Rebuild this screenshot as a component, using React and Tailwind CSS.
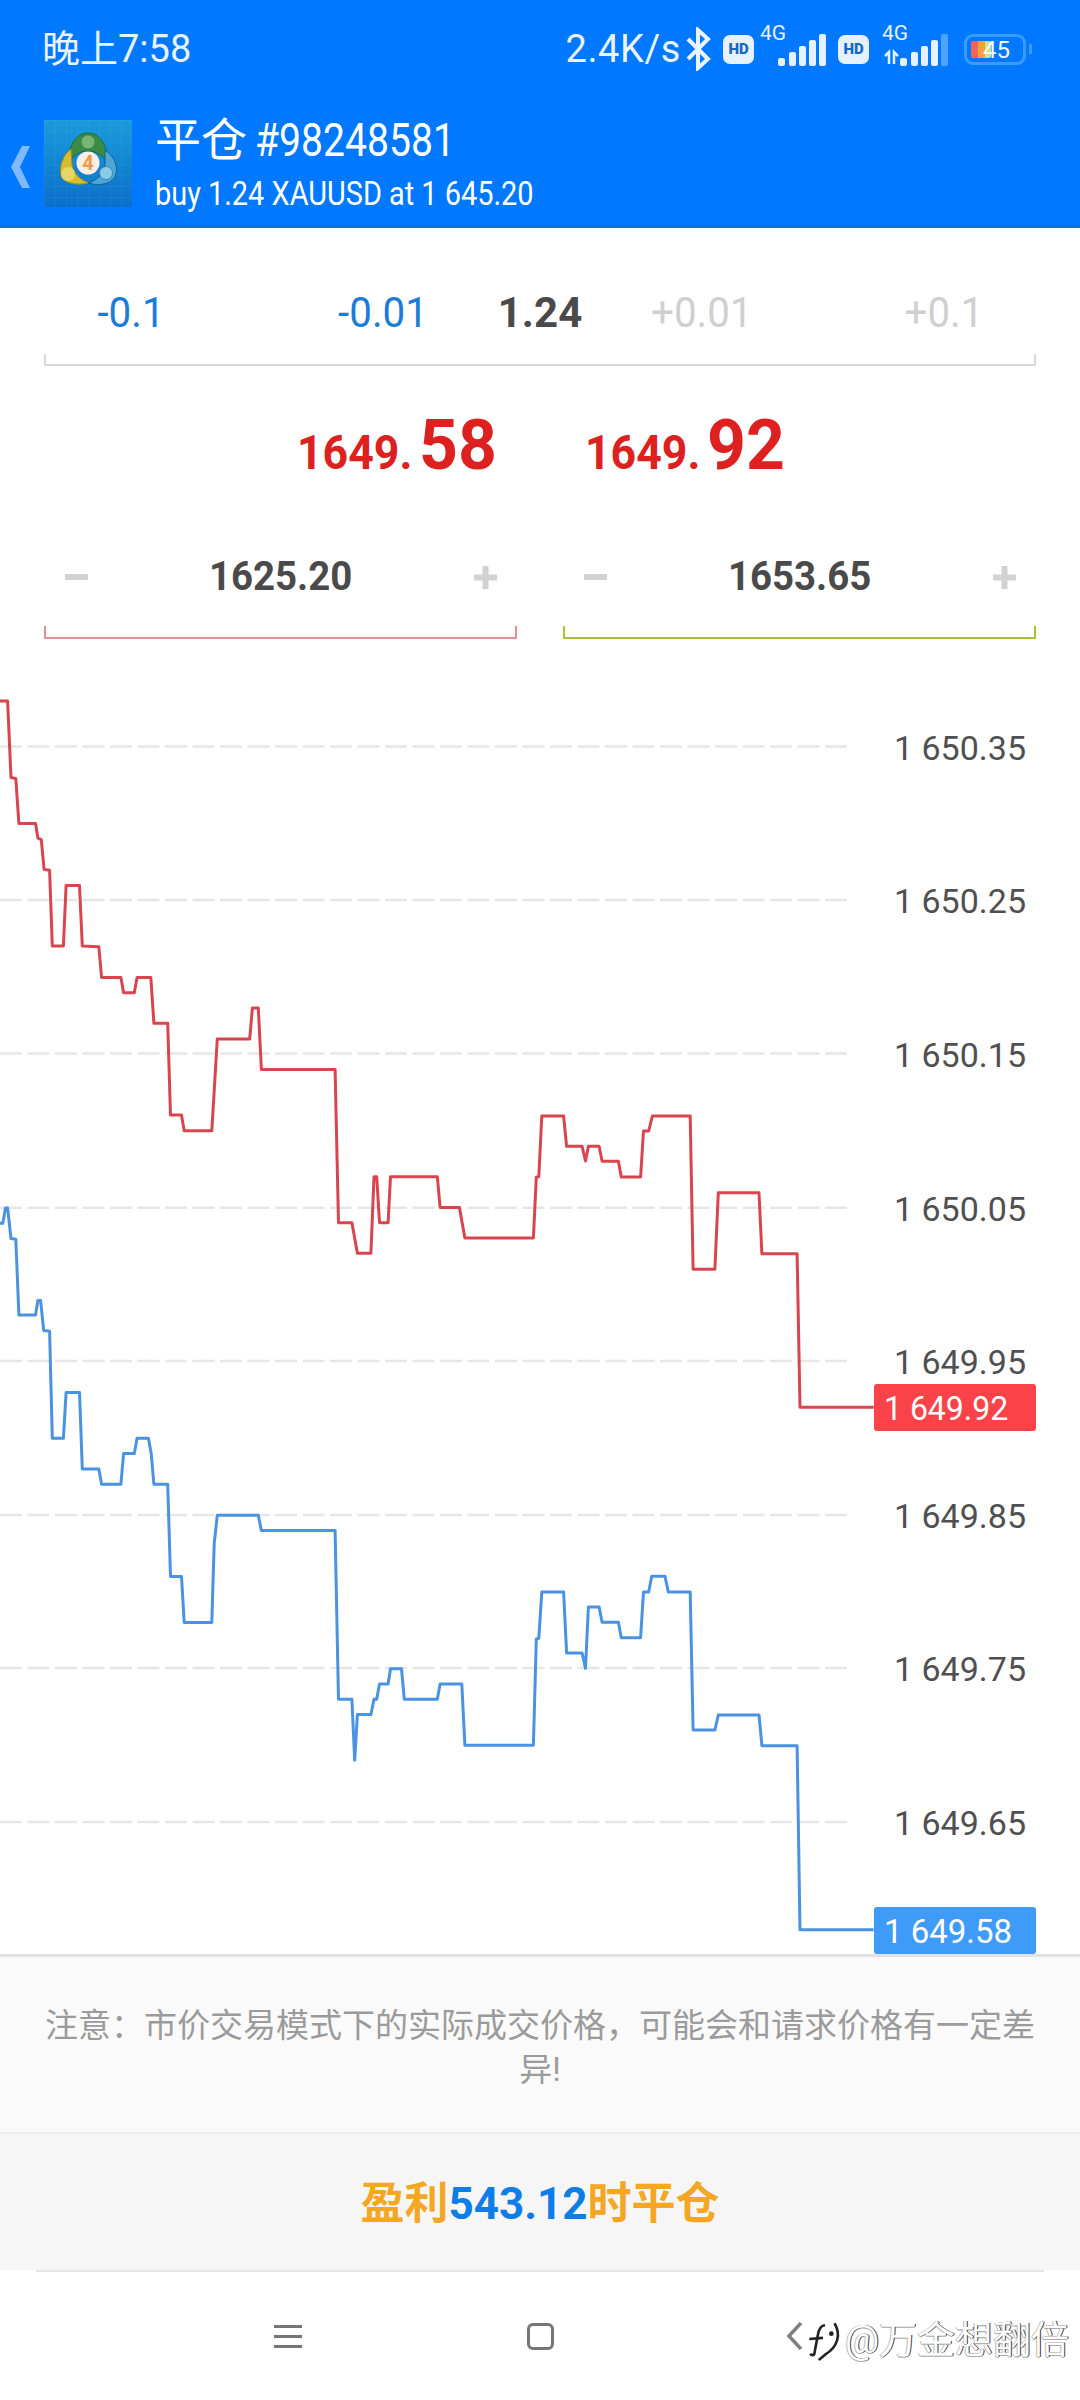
import React from "react";

const crop = (pts, sx, sy, ox, oy) => pts.map(([x, y]) => `${(x / sx + ox).toFixed(1)},${(y / sy + oy).toFixed(1)}`).join(" ");

// traced from the chart, first half of each line then the second half
const askLine =
  crop([[0,55],[22,55],[32,255],[46,257],[55,375],[103,375],[110,413],[120,417],[128,495],[144,497],[152,695],[184,695],[192,537],[231,537],[239,695],[287,697],[295,777],[351,777],[359,817],[390,817],[398,777],[438,777],[447,897],[487,897],[495,1137],[527,1137],[535,1178],[615,1178],[631,938],[725,938],[733,857],[750,857],[759,1018],[973,1018],[983,1418],[1022,1418],[1038,1498],[1077,1498],[1086,1298],[1094,1298],[1102,1418],[1127,1418],[1134,1298],[1270,1298],[1278,1378],[1334,1378],[1350,1458],[1549,1458]], 2.904, 2.613, 0, 680) +
  " " +
  crop([[98,352],[105,350],[113,168],[172,168],[180,259],[222,259],[231,303],[239,259],[268,259],[276,304],[320,304],[328,351],[380,351],[388,213],[402,213],[412,168],[514,168],[522,628],[581,628],[590,398],[700,398],[708,581],[803,581],[811,1042],[1010,1042]], 2.703, 3, 500, 1060);

const bidLine =
  crop([[0,113],[8,113],[16,73],[22,73],[32,153],[46,155],[55,353],[103,353],[110,315],[118,315],[127,393],[144,395],[152,675],[184,675],[192,555],[231,555],[239,755],[287,755],[295,795],[351,795],[359,715],[390,715],[398,675],[431,675],[439,715],[447,795],[487,795],[495,1036],[527,1036],[535,1156],[615,1156],[622,950],[631,876],[750,876],[759,916],[973,916],[983,1357],[1022,1357],[1030,1516],[1038,1397],[1077,1397],[1086,1357],[1094,1357],[1102,1317],[1127,1317],[1134,1277],[1166,1277],[1174,1357],[1270,1357],[1278,1317],[1341,1317],[1350,1477],[1549,1477]], 2.904, 2.613, 0, 1180) +
  " " +
  crop([[98,537],[105,535],[113,396],[172,396],[180,579],[222,579],[231,625],[239,441],[268,441],[276,487],[320,487],[328,533],[380,533],[388,396],[402,396],[410,349],[446,349],[455,396],[514,396],[522,810],[581,810],[590,765],[700,765],[708,857],[803,857],[811,1409],[1010,1409]], 2.703, 3, 500, 1460);

const gridLines = [746.5, 900, 1053.5, 1207.7, 1361, 1515, 1668, 1822];
const priceLabels = ["1 650.35", "1 650.25", "1 650.15", "1 650.05", "1 649.95", "1 649.85", "1 649.75", "1 649.65"];

function Mt4Logo() {
  return (
    <svg width="88" height="87" viewBox="0 0 88 87" className="shrink-0">
      <defs>
        <linearGradient id="tile" x1="0" y1="0" x2="0" y2="1">
          <stop offset="0" stopColor="#1a9bdc" />
          <stop offset="1" stopColor="#0b6fca" />
        </linearGradient>
        <pattern id="tileGrid" width="11" height="11" patternUnits="userSpaceOnUse">
          <path d="M11 0H0V11" fill="none" stroke="#ffffff" strokeOpacity="0.08" />
        </pattern>
      </defs>
      <rect width="88" height="87" fill="url(#tile)" />
      <rect width="88" height="87" fill="url(#tileGrid)" />
      <path d="M25 42C24 25 33 13 44 13s20 12 19 29c-5-8-12-11-19-11s-14 3-19 11z" fill="#3b8a45" stroke="#1f6a3a" />
      <circle cx="44" cy="22" r="6.5" fill="#78b574" />
      <path d="M27 29C19 35 15 46 17 55c2 8 14 11 29 8-9-2-16-9-18-18z" fill="#d6bd2e" stroke="#9a8a20" />
      <circle cx="24" cy="54" r="7" fill="#e8d566" />
      <path d="M61 30c9 6 13 15 11 24-2 9-15 13-28 9 8-2 16-9 17-18z" fill="#4da6d6" stroke="#0f5f99" />
      <circle cx="62" cy="53" r="6.5" fill="#8acbe6" stroke="#0f5f99" strokeWidth="0.5" />
      <circle cx="44" cy="43" r="11.5" fill="#f6efe3" />
      <text x="44" y="50" textAnchor="middle" fontFamily="Roboto" fontWeight="700" fontSize="20" fill="#ef9a4a">4</text>
    </svg>
  );
}

function HdBadge() {
  return (
    <span className="flex h-[29px] w-[31px] items-center justify-center rounded-[7px] bg-[#e6f1ff] text-[15px] leading-none font-black text-[#1668c8]">
      HD
    </span>
  );
}

function Signal({ lastDim, arrows }) {
  return (
    <div className="relative h-[38px] w-[66px]">
      <span className="absolute top-[-8px] left-0 text-[21px] leading-[22px] text-[#e6f1ff]">4G</span>
      <svg width="66" height="38" viewBox="0 0 66 38" className="absolute inset-0">
        {arrows && <path d="M3 26l4-4v12M12 34v-12l4 4" fill="none" stroke="#e6f1ff" strokeWidth="2.5" />}
        <g fill="#e6f1ff">
          <rect x="18" y="28" width="7" height="8" rx="2" />
          <rect x="29" y="22" width="7" height="14" rx="2" />
          <rect x="39" y="16" width="7" height="20" rx="2" />
          <rect x="49" y="10" width="7" height="26" rx="2" />
          <rect x="59" y="4" width="7" height="32" rx="2" fillOpacity={lastDim ? 0.35 : 1} />
        </g>
      </svg>
    </div>
  );
}

function StatusBar() {
  return (
    <div className="flex h-[96px] items-center justify-between pt-[2px] pr-[54px] pl-[42px] text-[#eaf3ff]">
      <span className="text-[38px] leading-none">晚上7:58</span>
      <div className="flex items-center">
        <span className="text-[38px] leading-none tracking-[0.6px]">2.4K/s</span>
        <svg width="26" height="44" viewBox="0 0 26 44" fill="none" stroke="#eaf3ff" strokeWidth="4" className="ml-[4px]">
          <path d="M3 12l20 20-10 9V3l10 9L3 32" />
        </svg>
        <div className="ml-[12px] flex items-center">
          <HdBadge />
        </div>
        <div className="ml-[6px]">
          <Signal />
        </div>
        <div className="ml-[12px]">
          <HdBadge />
        </div>
        <div className="ml-[13px]">
          <Signal lastDim arrows />
        </div>
        <div className="relative ml-[16px] h-[31px] w-[62px] rounded-[9px] border-[3px] border-[#3a9bff]">
          <div className="absolute top-[4px] left-[4px] flex h-[17px] overflow-hidden rounded-[2px]">
            <span className="w-[7px] bg-[#f0645c]" />
            <span className="w-[7px] bg-[#f3a33c]" />
            <span className="w-[6px] bg-[#cfe28a]" />
          </div>
          <span className="absolute top-[1px] left-[16px] text-[24px] leading-[24px] text-[#f2f7ff]">45</span>
          <span className="absolute top-[7px] right-[-9px] h-[10px] w-[3px] bg-[#3a9bff]" />
        </div>
      </div>
    </div>
  );
}

function TitleBar() {
  return (
    <div className="flex h-[129px] items-start">
      <svg width="20" height="42" viewBox="0 0 20 42" className="mt-[50px] ml-[11px] shrink-0">
        <path d="M19 0h-8L0 21l11 21h8L9 21z" fill="#7fb9ff" />
      </svg>
      <div className="mt-[24px] ml-[13px]">
        <Mt4Logo />
      </div>
      <div className="ml-[23px] flex flex-col text-white">
        <div className="mt-[18px] flex h-[52px] items-center">
          <span className="text-[46px] leading-none">平仓</span>
          <span className="ml-[8px] inline-block origin-left scale-x-[0.85] text-[46px] leading-none whitespace-nowrap">#98248581</span>
        </div>
        <span className="mt-[7px] inline-block origin-left scale-x-[0.85] text-[34px] leading-[40px] whitespace-nowrap">buy 1.24 XAUUSD at 1 645.20</span>
      </div>
    </div>
  );
}

function Bracket({ className }) {
  return <div className={`border-x-2 border-b-2 ${className}`} />;
}

function PlusMark() {
  return (
    <svg width="23" height="23" viewBox="0 0 23 23" fill="#d2d2d2">
      <rect y="8.5" width="23" height="6" />
      <rect x="8.5" width="6" height="23" />
    </svg>
  );
}

function PriceInput({ value, bracket }) {
  return (
    <div className="w-[473px]">
      <div className="flex h-[106px] items-center justify-between pt-[8px] pr-[20px] pl-[21px]">
        <span className="h-[6px] w-[23px] bg-[#d2d2d2]" />
        <span className="inline-block scale-x-[0.96] text-[40px] leading-none font-bold text-[#4a4a4a]">{value}</span>
        <PlusMark />
      </div>
      <Bracket className={`h-[13px] ${bracket}`} />
    </div>
  );
}

function BigPrice({ small, big }) {
  return (
    <div className="flex w-[288px] items-baseline font-bold text-[#dd2020]">
      <span className="inline-block origin-left scale-x-[0.93] text-[48px] leading-none">{small}</span>
      <span className="ml-[-2px] inline-block origin-left scale-x-[0.97] text-[70px] leading-none">{big}</span>
    </div>
  );
}

function Chart() {
  return (
    <div className="relative flex-1">
      <svg width="1080" height="1315" viewBox="0 639 1080 1315" className="absolute inset-0">
        {gridLines.map((y) => (
          <line key={y} x1="0" x2="847" y1={y} y2={y} stroke="#e6e6e6" strokeWidth="2.5" strokeDasharray="22 5.5" />
        ))}
        <polyline points={askLine} fill="none" stroke="#d8454e" strokeWidth="3" strokeLinejoin="round" />
        <polyline points={bidLine} fill="none" stroke="#4a92e2" strokeWidth="3" strokeLinejoin="round" />
      </svg>
      <div className="absolute top-[32px] right-[54px] flex flex-col items-end text-[34px] leading-none text-[#505050]">
        {priceLabels.map((label) => (
          <span key={label} className="flex h-[153.6px] items-center whitespace-pre">
            {label}
          </span>
        ))}
      </div>
      <div className="absolute top-[745px] right-[44px] flex h-[47px] w-[162px] items-center rounded-[3px] bg-[#fa4348] pl-[10px] text-[34px] leading-none text-white">
        <span className="inline-block origin-left scale-x-[0.94]">1 649.92</span>
      </div>
      <div className="absolute right-[44px] bottom-0 flex h-[47px] w-[162px] items-center rounded-[3px] bg-[#3f9bf8] pl-[10px] text-[34px] leading-none text-white">
        <span className="inline-block origin-left scale-x-[0.97]">1 649.58</span>
      </div>
    </div>
  );
}

function NavBar() {
  return (
    <div className="relative flex h-[128px] items-center pl-[274px]">
      <div className="flex h-[23px] w-[28px] flex-col justify-between">
        <span className="h-[3px] bg-[#757575]" />
        <span className="h-[3px] bg-[#757575]" />
        <span className="h-[3px] bg-[#757575]" />
      </div>
      <div className="ml-[225px] h-[27px] w-[27px] rounded-[6px] border-[3px] border-[#757575]" />
      <svg width="16" height="28" viewBox="0 0 16 28" fill="none" stroke="#808080" strokeWidth="3.5" className="ml-[233px]">
        <path d="M14 1L2 14l12 13" />
      </svg>
      <div className="absolute top-[47px] left-[806px] flex items-center">
        <svg width="36" height="42" viewBox="0 0 34 40" fill="none" stroke="#222222" strokeWidth="2.5" className="shrink-0">
          <path d="M18 6c-4 0-6 4-7 10L8 32c0 3-3 3-4 1" />
          <path d="M3 19l13-1" />
          <path d="M27 4c6 10 4 22-9 30l-6 5" />
          <circle cx="24" cy="14" r="1" fill="#222222" />
        </svg>
        <span className="ml-[3px] text-[38px] leading-none whitespace-nowrap text-white [text-shadow:1px_0_0_#333333,0_1px_0_#aaaaaa,-1px_0_0_#bbbbbb]">
          @万金想翻倍
        </span>
      </div>
    </div>
  );
}

export default function App() {
  return (
    <div className="flex h-[2400px] w-[1080px] flex-col overflow-hidden bg-white font-['Roboto','Noto_Sans_CJK_SC',sans-serif]">
      <header className="h-[228px] shrink-0 border-b-[3px] border-[#1b6dcc] bg-[#0078ff]">
        <StatusBar />
        <TitleBar />
      </header>

      <section className="shrink-0">
        <div className="flex h-[126px] items-center pt-[44px] pl-[79px] text-[42px] leading-none">
          <span className="ml-[2px] inline-block w-[100px] scale-x-[0.96] text-center text-[#1a7bd8]">-0.1</span>
          <span className="ml-[152px] inline-block w-[100px] scale-x-[0.96] text-center text-[#1a7bd8]">-0.01</span>
          <span className="ml-[57px] inline-block w-[100px] text-center font-bold text-[#4a4a4a]">1.24</span>
          <span className="ml-[59px] inline-block w-[100px] scale-x-[0.96] text-center text-[#cfcfcf]">+0.01</span>
          <span className="ml-[145px] inline-block w-[100px] scale-x-[0.96] text-center text-[#cfcfcf]">+0.1</span>
        </div>
        <Bracket className="mx-[44px] h-[12px] border-[#d8d8d8]" />

        <div className="flex h-[154px] items-start pt-[44px] pl-[297px]">
          <BigPrice small="1649." big="58" />
          <BigPrice small="1649." big="92" />
        </div>

        <div className="flex justify-between px-[44px]">
          <PriceInput value="1625.20" bracket="border-[#e58f95]" />
          <PriceInput value="1653.65" bracket="border-[#a9c139]" />
        </div>
      </section>

      <Chart />

      <div className="h-[178px] shrink-0 border-t-[3px] border-[#e2e2e2] bg-[#fafafa] px-[44px] pt-[47px] text-center text-[33px] leading-[44px] text-[#9b9b9b]">
        {"注意\uFF1A市价交易模式下的实际成交价格\uFF0C可能会和请求价格有一定差异!"}
      </div>

      <button className="flex h-[138px] shrink-0 items-center justify-center border-t-2 border-[#ececec] bg-[#f6f6f6] pt-[4px] text-[44px] leading-none font-bold text-[#f5a623]">
        盈利<span className="text-[#0d7de8]">543.12</span>时平仓
      </button>

      <div className="mx-[36px] h-[2px] shrink-0 bg-[#e6e6e6]" />
      <NavBar />
    </div>
  );
}
